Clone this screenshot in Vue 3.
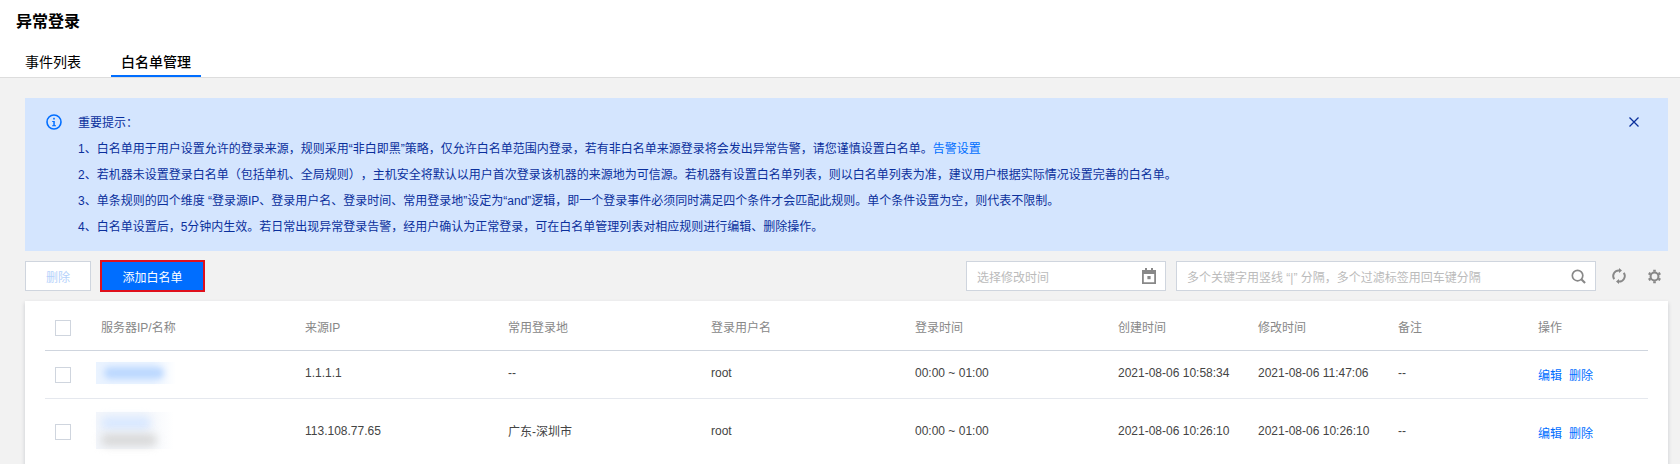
<script setup>
const notes = [
  '2、若机器未设置登录白名单（包括单机、全局规则），主机安全将默认以用户首次登录该机器的来源地为可信源。若机器有设置白名单列表，则以白名单列表为准，建议用户根据实际情况设置完善的白名单。',
  '3、单条规则的四个维度 “登录源IP、登录用户名、登录时间、常用登录地”设定为“and”逻辑，即一个登录事件必须同时满足四个条件才会匹配此规则。单个条件设置为空，则代表不限制。',
  '4、白名单设置后，5分钟内生效。若日常出现异常登录告警，经用户确认为正常登录，可在白名单管理列表对相应规则进行编辑、删除操作。'
]
const columns = ['服务器IP/名称', '来源IP', '常用登录地', '登录用户名', '登录时间', '创建时间', '修改时间', '备注', '操作']
const rows = [
  { id: 1, ip: '1.1.1.1', place: '--', user: 'root', time: '00:00 ~ 01:00', created: '2021-08-06 10:58:34', modified: '2021-08-06 11:47:06', note: '--', double: false },
  { id: 2, ip: '113.108.77.65', place: '广东-深圳市', user: 'root', time: '00:00 ~ 01:00', created: '2021-08-06 10:26:10', modified: '2021-08-06 10:26:10', note: '--', double: true }
]
</script>

<template>
  <div class="page">
    <header class="head">
      <h1 class="title">异常登录</h1>
      <nav class="tabs">
        <a class="tab">事件列表</a>
        <a class="tab active">白名单管理</a>
      </nav>
    </header>

    <main class="content">
      <section class="alert">
        <svg class="alert-icon" viewBox="0 0 16 16" width="16" height="16">
          <circle cx="8" cy="8" r="7" fill="none" stroke="#006eff" stroke-width="1.6" />
          <rect x="7.2" y="3.8" width="1.6" height="1.7" fill="#006eff" />
          <path d="M6.2 7h2.6v4.2h1.2v1.1H6.1v-1.1h1.2V8.1H6.2z" fill="#006eff" />
        </svg>
        <div class="alert-body">
          <p>重要提示：</p>
          <p>1、白名单用于用户设置允许的登录来源，规则采用“非白即黑”策略，仅允许白名单范围内登录，若有非白名单来源登录将会发出异常告警，请您谨慎设置白名单。<a class="alert-link">告警设置</a></p>
          <p v-for="note in notes" :key="note">{{ note }}</p>
        </div>
        <svg class="alert-close" viewBox="0 0 10 10" width="10" height="10">
          <path d="M0.5 0.5l9 9M9.5 0.5l-9 9" stroke="#0a2f9c" stroke-width="1.3" fill="none" />
        </svg>
      </section>

      <div class="toolbar">
        <button class="btn btn-disabled">删除</button>
        <button class="btn btn-primary">添加白名单</button>
        <div class="spacer"></div>
        <div class="field field-date">
          <span class="placeholder">选择修改时间</span>
          <svg viewBox="0 0 14 16" width="14" height="16">
            <path d="M0 2h3V0h2v2h4V0h2v2h3v14H0zM1.8 6v8.2h10.4V6z" fill="#888" />
            <rect x="5.4" y="8" width="3.2" height="3.2" fill="#888" />
          </svg>
        </div>
        <div class="field field-search">
          <span class="placeholder">多个关键字用竖线 “|” 分隔，多个过滤标签用回车键分隔</span>
          <svg viewBox="0 0 16 16" width="15" height="15">
            <circle cx="7" cy="7" r="5.6" fill="none" stroke="#888" stroke-width="1.8" />
            <path d="M11 11l4 4" stroke="#888" stroke-width="2.2" />
          </svg>
        </div>
        <svg class="tool-icon refresh" viewBox="0 0 16 16" width="16" height="16">
          <path d="M3.2 11.2A5.6 5.6 0 0 1 8.6 2.5M12.8 4.8A5.6 5.6 0 0 1 7.4 13.5" fill="none" stroke="#888" stroke-width="1.9" />
          <path d="M8 0l3 2.6L8 5zM8 11l-3 2.4L8 16z" fill="#888" />
        </svg>
        <svg class="tool-icon gear" viewBox="0 0 16 16" width="15" height="15">
          <circle cx="8" cy="8" r="4.2" fill="none" stroke="#888" stroke-width="2.2" />
          <path d="M8 3V.8M8 13v2.2M12.3 5.5l1.9-1.1M3.7 5.5L1.8 4.4M12.3 10.5l1.9 1.1M3.7 10.5l-1.9 1.1" stroke="#888" stroke-width="2.8" fill="none" />
        </svg>
      </div>

      <section class="card">
        <div class="row row-head">
          <span class="check-cell"><i class="checkbox"></i></span>
          <span v-for="col in columns" :key="col" class="cell">{{ col }}</span>
        </div>
        <div v-for="row in rows" :key="row.id" class="row" :class="{ tall: row.double }">
          <span class="check-cell"><i class="checkbox"></i></span>
          <span class="cell">
            <span class="masked" :class="{ double: row.double }">
              <i class="blob blue"></i>
              <i v-if="row.double" class="blob gray"></i>
            </span>
          </span>
          <span class="cell">{{ row.ip }}</span>
          <span class="cell">{{ row.place }}</span>
          <span class="cell">{{ row.user }}</span>
          <span class="cell">{{ row.time }}</span>
          <span class="cell">{{ row.created }}</span>
          <span class="cell">{{ row.modified }}</span>
          <span class="cell">{{ row.note }}</span>
          <span class="cell actions"><a>编辑</a><a>删除</a></span>
        </div>
      </section>
    </main>
  </div>
</template>

<style>
html, body { margin: 0; overflow: hidden; background: #f2f2f2; }
</style>

<style scoped>
.page {
  height: 464px; overflow: hidden; background: #f2f2f2; color: #444;
  font-family: "Liberation Sans", "Noto Sans CJK SC", sans-serif; font-size: 12px;
  text-spacing-trim: space-all;
}
.head { height: 77px; background: #fff; border-bottom: 1px solid #ddd; display: flex; flex-direction: column; justify-content: space-between; }
.title { margin: 0; padding: 12px 16px 0; font-size: 16px; line-height: 20px; font-weight: 700; color: #000; }
.tabs { display: flex; gap: 20px; padding-left: 15px; }
.tab { padding: 8px 10px 0; height: 34px; line-height: 22px; font-size: 14px; color: #000; box-sizing: border-box; border-bottom: 2px solid transparent; }
.tab.active { font-weight: 500; border-bottom-color: #006eff; }

.content { padding: 20px 12px 0 25px; }
.alert { position: relative; height: 153px; box-sizing: border-box; padding: 12px 20px 0 21px; background: #d4e5fe; color: #0a2f9c; display: flex; gap: 16px; }
.alert-icon { flex-shrink: 0; margin-top: 4px; }
.alert-body { flex: 1; }
.alert-body p { margin: 0; height: 26px; line-height: 26px; }
.alert-link { color: #006eff; }
.alert-close { position: absolute; right: 29px; top: 19px; }

.toolbar { display: flex; align-items: center; height: 32px; margin-top: 9px; }
.btn { height: 30px; padding: 0; box-sizing: border-box; font: inherit; border-radius: 0; }
.btn-disabled { width: 66px; background: #fff; border: 1px solid #cfd5de; color: #b5d2fb; }
.btn-primary { height: 32px; width: 105px; margin-left: 9px; background: #006eff; color: #fff; border: 2px solid #e0101c; }
.spacer { flex: 1; }
.field { height: 30px; box-sizing: border-box; background: #fff; border: 1px solid #cfd5de; display: flex; align-items: center; justify-content: space-between; padding: 0 10px; }
.field-date { width: 200px; margin-right: 10px; padding-right: 9px; }
.field-search { width: 420px; padding-right: 9px; }
.placeholder { color: #bbb; }
.tool-icon { flex-shrink: 0; }
.refresh { margin-left: 15px; }
.gear { margin-left: 20px; margin-right: 6px; }

.card { margin-top: 9px; height: 165px; box-sizing: border-box; background: #fff; padding: 5px 20px 0; box-shadow: 0 2px 4px rgba(54, 58, 80, .22); }
.row {
  display: grid; grid-template-columns: 46px 204px 203px 203px 204px 203px 140px 140px 140px 120px;
  align-items: center; height: 48px; box-sizing: border-box; border-bottom: 1px solid #e5e8ee;
}
.row.tall { height: 66px; border-bottom: none; }
.row-head { height: 45px; border-bottom-color: #cfd5de; color: #888; }
.check-cell { display: flex; padding-left: 10px; }
.checkbox { display: block; width: 16px; height: 16px; box-sizing: border-box; border: 1px solid #cfd5de; background: #fff; }
.cell { padding: 0 0 3px 10px; white-space: nowrap; }
.masked { display: block; position: relative; width: 80px; height: 22px; margin-left: -5px; background: linear-gradient(90deg, #eaf3ff 0, #eaf3ff 70%, #fff 100%); }
.masked.double { height: 37px; width: 78px; background: linear-gradient(90deg, #f3f6fb 0, #f3f6fb 60%, #fff 100%); }
.blob { display: block; position: absolute; left: 8px; width: 60px; height: 12px; top: 5px; background: #bcd8ff; border-radius: 6px; filter: blur(3px); }
.double .blob.blue { left: 5px; width: 50px; top: 5px; height: 12px; background: #d7e7ff; filter: blur(4px); }
.double .blob.gray { left: 5px; width: 56px; top: 22px; height: 12px; background: #d8d8d8; filter: blur(4px); }
.actions { display: flex; gap: 7px; color: #006eff; padding-bottom: 0; }
</style>
